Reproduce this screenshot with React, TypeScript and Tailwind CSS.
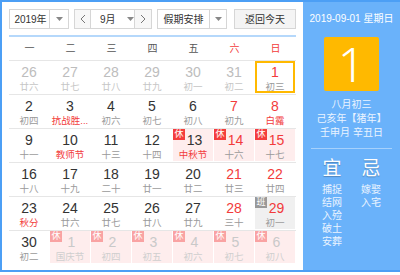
import React from "react";

type Cell = {
  d: string;
  l: string;
  numRed?: boolean;
  lunarRed?: boolean;
  other?: boolean;
  tag?: "休" | "班";
  today?: boolean;
  faded?: boolean;
};

const rows: Cell[][] = [
  [
    { d: "26", l: "廿六", other: true },
    { d: "27", l: "廿七", other: true },
    { d: "28", l: "廿八", other: true },
    { d: "29", l: "廿九", other: true },
    { d: "30", l: "初一", other: true },
    { d: "31", l: "初二", other: true },
    { d: "1", l: "初三", numRed: true, today: true },
  ],
  [
    { d: "2", l: "初四" },
    { d: "3", l: "抗战胜...", lunarRed: true },
    { d: "4", l: "初六" },
    { d: "5", l: "初七" },
    { d: "6", l: "初八" },
    { d: "7", l: "初九", numRed: true },
    { d: "8", l: "白露", numRed: true, lunarRed: true },
  ],
  [
    { d: "9", l: "十一" },
    { d: "10", l: "教师节", lunarRed: true },
    { d: "11", l: "十三" },
    { d: "12", l: "十四" },
    { d: "13", l: "中秋节", lunarRed: true, tag: "休" },
    { d: "14", l: "十六", numRed: true, tag: "休" },
    { d: "15", l: "十七", numRed: true, tag: "休" },
  ],
  [
    { d: "16", l: "十八" },
    { d: "17", l: "十九" },
    { d: "18", l: "二十" },
    { d: "19", l: "廿一" },
    { d: "20", l: "廿二" },
    { d: "21", l: "廿三", numRed: true },
    { d: "22", l: "廿四", numRed: true },
  ],
  [
    { d: "23", l: "秋分", lunarRed: true },
    { d: "24", l: "廿六" },
    { d: "25", l: "廿七" },
    { d: "26", l: "廿八" },
    { d: "27", l: "廿九" },
    { d: "28", l: "三十", numRed: true },
    { d: "29", l: "初一", numRed: true, tag: "班" },
  ],
  [
    { d: "30", l: "初二" },
    { d: "1", l: "国庆节", tag: "休", faded: true },
    { d: "2", l: "初四", tag: "休", faded: true },
    { d: "3", l: "初五", tag: "休", faded: true },
    { d: "4", l: "初六", tag: "休", faded: true },
    { d: "5", l: "初七", tag: "休", faded: true },
    { d: "6", l: "初八", tag: "休", faded: true },
  ],
];

const weekdays = ["一", "二", "三", "四", "五", "六", "日"];

function Tri() {
  return (
    <svg width="7" height="4" viewBox="0 0 7 4">
      <path d="M0 0 L7 0 L3.5 4 Z" fill="#888" />
    </svg>
  );
}

function Chevron({ dir }: { dir: "l" | "r" }) {
  return (
    <svg width="6" height="10" viewBox="0 0 6 10">
      <path
        d={dir === "l" ? "M5 1 L1 5 L5 9" : "M1 1 L5 5 L1 9"}
        fill="none"
        stroke="#777"
        strokeWidth="1"
      />
    </svg>
  );
}

function DayCell({ c }: { c: Cell }) {
  let bg = "";
  if (c.tag === "休") bg = "bg-[#feeded]";
  if (c.tag === "班") bg = "bg-[#f0f0f0]";
  let numColor = "text-[#333333]";
  if (c.numRed) numColor = "text-[#f23b3b]";
  if (c.other) numColor = "text-[#bdbdbd]";
  if (c.faded) numColor = "text-[#c9c9c9]";
  let lunarColor = "text-[#9a9a9a]";
  if (c.lunarRed) lunarColor = "text-[#f23b3b]";
  if (c.other) lunarColor = "text-[#c6c6c6]";
  if (c.faded) lunarColor = "text-[#cfcfcf]";
  const badgeColor =
    c.tag === "班"
      ? "bg-[#999999]"
      : c.faded
      ? "bg-[#f9a3a3]"
      : "bg-[#f43d3d]";
  return (
    <div
      className={`relative w-[40px] h-[32px] mr-[1px] flex flex-col items-center ${bg} ${
        c.today ? "shadow-[inset_0_0_0_2px_#ffb900]" : ""
      }`}
    >
      {c.tag && (
        <div
          className={`absolute top-0 left-0 w-[12px] h-[11px] ${badgeColor} text-white text-[9px] leading-[11px] text-center`}
        >
          {c.tag}
        </div>
      )}
      <div
        className={`mt-[4px] text-[14px] leading-[14px] ${numColor} ${
          c.tag ? "pl-[3px]" : ""
        }`}
      >
        {c.d}
      </div>
      <div
        className={`mt-[3px] text-[9.5px] leading-[10px] whitespace-nowrap ${lunarColor}`}
      >
        {c.l}
      </div>
    </div>
  );
}

export default function App() {
  return (
    <div className="w-[400px] h-[275px] bg-white overflow-hidden font-['Liberation_Sans','Noto_Sans_CJK_SC',sans-serif]">
      <div className="w-[400px] h-[272px] border-l-2 border-t-2 border-b-2 border-[#4c9ff5] flex">
        {/* Left calendar */}
        <div className="w-[301px] h-full pl-[7px] pt-[7px] bg-white">
          {/* Header */}
          <div className="flex items-center h-[20px] text-[10px] text-[#333]">
            <div className="w-[60px] h-full border border-[#d6d6d6] flex items-center bg-white">
              <span className="flex-1 text-center pl-[2px]">2019年</span>
              <div className="w-[19px] h-full border-l border-[#d6d6d6] flex items-center justify-center">
                <Tri />
              </div>
            </div>
            <div className="ml-[5px] w-[78px] h-full border border-[#d6d6d6] flex items-center bg-white">
              <div className="w-[16px] h-full border-r border-[#d6d6d6] bg-[#f7f7f7] flex items-center justify-center">
                <Chevron dir="l" />
              </div>
              <div className="flex-1 h-full flex items-center">
                <span className="ml-[9px]">9月</span>
                <span className="ml-[11px] flex items-center">
                  <Tri />
                </span>
              </div>
              <div className="w-[17px] h-full border-l border-[#d6d6d6] bg-[#f7f7f7] flex items-center justify-center">
                <Chevron dir="r" />
              </div>
            </div>
            <div className="ml-[5px] w-[70px] h-full border border-[#d6d6d6] flex items-center bg-white">
              <span className="flex-1 text-center">假期安排</span>
              <div className="w-[17px] h-full border-l border-[#d6d6d6] flex items-center justify-center">
                <Tri />
              </div>
            </div>
            <div className="ml-[7px] w-[62px] h-full border border-[#d6d6d6] bg-[#f4f4f4] flex items-center justify-center">
              返回今天
            </div>
          </div>
          {/* Blue line */}
          <div className="mt-[6px] w-[287px] h-[2px] bg-[#b5d8fb]" />
          {/* Weekdays */}
          <div className="w-[287px] h-[23px] grid grid-cols-7 items-center text-[10px]">
            {weekdays.map((w, i) => (
              <div
                key={w}
                className={`text-center ${i >= 5 ? "text-[#f23b3b]" : "text-[#555]"}`}
              >
                {w}
              </div>
            ))}
          </div>
          {/* Days */}
          <div className="w-[287px]">
            {rows.map((r, ri) => (
              <div
                key={ri}
                className="border-t border-[#e6e6e6] pt-0 pb-[1px] flex"
              >
                {r.map((c, ci) => (
                  <DayCell key={ci} c={c} />
                ))}
              </div>
            ))}
          </div>
        </div>
        {/* Right panel */}
        <div className="flex-1 h-full bg-[#6ab2fa] flex flex-col items-center text-white">
          <div className="mt-[11px] text-[10px] leading-[12px]">2019-09-01 星期日</div>
          <div className="mt-[12px] w-[55px] h-[54px] bg-[#ffb900] rounded-[2px] flex items-center justify-center">
            <span className="text-[48px] leading-[48px] font-['Noto_Sans',sans-serif] font-light">
              1
            </span>
          </div>
          <div className="mt-[7px] text-[10px] leading-[14px] text-[#eaf4ff] text-center">
            <div>八月初三</div>
            <div>己亥年【猪年】</div>
            <div>壬申月 辛丑日</div>
          </div>
          <div className="mt-[8px] w-[81px] h-[1px] bg-[#a6d1fc]" />
          <div className="mt-[9px] flex justify-center">
            <div className="w-[39px] flex flex-col items-center">
              <div className="text-[19px] leading-[22px] [text-shadow:0_1px_1px_rgba(0,0,0,0.25)]">宜</div>
              <div className="mt-[3px] text-[10px] leading-[13px] text-[#eaf4ff] flex flex-col items-center">
                <span>捕捉</span>
                <span>结网</span>
                <span>入殓</span>
                <span>破土</span>
                <span>安葬</span>
              </div>
            </div>
            <div className="w-[39px] flex flex-col items-center">
              <div className="text-[19px] leading-[22px] [text-shadow:0_1px_1px_rgba(0,0,0,0.25)]">忌</div>
              <div className="mt-[3px] text-[10px] leading-[13px] text-[#eaf4ff] flex flex-col items-center">
                <span>嫁娶</span>
                <span>入宅</span>
              </div>
            </div>
          </div>
        </div>
      </div>
    </div>
  );
}
